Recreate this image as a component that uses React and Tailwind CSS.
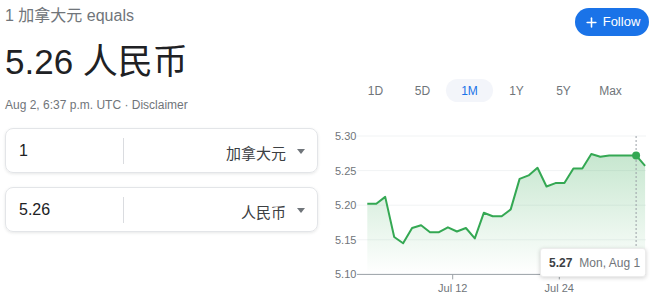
import { Plus } from 'lucide-react'

const FONT = { fontFamily: '"Liberation Sans", "Noto Sans CJK SC", Arial, sans-serif' }

const TABS = ['1D', '5D', '1M', '1Y', '5Y', 'Max']

// closing rates, Jul 2 – Aug 2
const RATES = [
  5.202, 5.202, 5.212, 5.154, 5.145, 5.167, 5.171, 5.161, 5.161, 5.168, 5.162, 5.167,
  5.152, 5.189, 5.184, 5.184, 5.194, 5.238, 5.243, 5.254, 5.227, 5.232, 5.232, 5.253,
  5.253, 5.274, 5.27, 5.272, 5.272, 5.272, 5.272, 5.257,
]

const Y_TICKS = [
  { label: '5.30', y: 11 },
  { label: '5.25', y: 45.6 },
  { label: '5.20', y: 80.2 },
  { label: '5.15', y: 114.8 },
]
const BASE_Y = 149.4

const toY = (v) => BASE_Y - ((v - 5.1) / 0.05) * 34.6
const toX = (i) => 37.3 + i * 8.96

function Chart() {
  const pts = RATES.map((v, i) => `${toX(i).toFixed(1)},${toY(v).toFixed(1)}`)
  const line = pts.join(' ')
  const area = `${toX(0)},${BASE_Y} ${line} ${toX(RATES.length - 1)},${BASE_Y}`
  const hx = toX(30)

  return (
    <div className="relative w-[320px] h-[182px]">
      <svg width="320" height="182" className="block">
        <defs>
          <linearGradient id="fillG" x1="0" y1="0" x2="0" y2="1">
            <stop offset="0%" stopColor="#34a853" stopOpacity="0.28" />
            <stop offset="100%" stopColor="#34a853" stopOpacity="0" />
          </linearGradient>
        </defs>
        {Y_TICKS.map(t => (
          <g key={t.label}>
            <line x1="27" x2="316" y1={t.y} y2={t.y} stroke="#f1f3f4" strokeWidth="1" />
            <text x="5" y={t.y + 4} fontSize="11" fill="#70757a" style={FONT}>{t.label}</text>
          </g>
        ))}
        <polygon points={area} fill="url(#fillG)" />
        <line x1={hx} x2={hx} y1="11" y2={BASE_Y} stroke="#9aa0a6" strokeWidth="1" strokeDasharray="2 2" />
        <polyline points={line} fill="none" stroke="#34a853" strokeWidth="2" strokeLinejoin="round" />
        <circle cx={hx} cy={toY(5.272)} r="4" fill="#34a853" />
        <line x1="27" x2="316" y1={BASE_Y} y2={BASE_Y} stroke="#9aa0a6" strokeWidth="1" />
        <text x="5" y={BASE_Y + 4} fontSize="11" fill="#70757a" style={FONT}>5.10</text>
        {[{ x: 122.7, l: 'Jul 12' }, { x: 229.3, l: 'Jul 24' }].map(t => (
          <g key={t.l}>
            <line x1={t.x} x2={t.x} y1={BASE_Y} y2={BASE_Y + 5} stroke="#9aa0a6" strokeWidth="1" />
            <text x={t.x} y={BASE_Y + 18} fontSize="11" fill="#70757a" textAnchor="middle" style={FONT}>{t.l}</text>
          </g>
        ))}
      </svg>
      {/* hover tooltip */}
      <div className="absolute left-[210px] top-[123px] w-[106px] h-[29px] bg-white rounded-[3px] shadow-[0_1px_4px_rgba(0,0,0,0.18)] border border-[#ececec] flex items-center pl-[8px] gap-[7px] text-[12px] whitespace-nowrap">
        <span className="font-semibold text-[#3c4043]">5.27</span>
        <span className="text-[#70757a]">Mon, Aug 1</span>
      </div>
    </div>
  )
}

function CurrencyBox({ amount, currency, className = '' }) {
  return (
    <div className={`w-[313px] h-[45px] border border-[#e3e5e8] rounded-[8px] shadow-[0_1px_3px_rgba(60,64,67,0.12)] flex items-center ${className}`}>
      <div className="w-[118px] h-[26px] flex items-center pl-[13px] border-r border-[#dadce0] text-[16px] text-[#202124]">
        {amount}
      </div>
      <div className="flex-1 flex items-center justify-end pt-[7px] pr-[12px] text-[15px] text-[#3c4043]">
        <span>{currency}</span>
        <span className="ml-[11px] mb-[6px] w-0 h-0 border-l-[4.5px] border-r-[4.5px] border-t-[5px] border-l-transparent border-r-transparent border-t-[#70757a]" />
      </div>
    </div>
  )
}

export default function App() {
  return (
    <div className="w-[650px] h-[307px] bg-white flex overflow-hidden" style={FONT}>
      {/* Left: converter */}
      <div className="w-[330px] pl-[5px]">
        <p className="mt-[6px] text-[16px] leading-[20px] text-[#70757a]">1 加拿大元 equals</p>
        <p className="mt-[18px] text-[35px] leading-[36px] text-[#202124]">5.26 人民币</p>
        <p className="mt-[17px] text-[12px] leading-[16px] text-[#70757a]">Aug 2, 6:37 p.m. UTC · Disclaimer</p>
        <CurrencyBox amount="1" currency="加拿大元" className="mt-[15px]" />
        <CurrencyBox amount="5.26" currency="人民币" className="mt-[14px]" />
      </div>

      {/* Right: follow + chart */}
      <div className="flex-1 flex flex-col">
        <div className="flex justify-end pt-[8px] pr-[1px]">
          <button className="h-[28px] w-[74px] rounded-full bg-[#1a73e8] text-white text-[13px] font-medium flex items-center justify-center gap-[4px]">
            <Plus size={15} strokeWidth={2.5} />
            Follow
          </button>
        </div>
        <div className="mt-[43px] flex pl-[22px]">
          {TABS.map(t => (
            <div
              key={t}
              className={`w-[47px] h-[23px] flex items-center justify-center rounded-full text-[12px] ${
                t === '1M' ? 'bg-[#f3f5fa] text-[#1a73e8]' : 'text-[#70757a]'
              }`}
            >
              {t}
            </div>
          ))}
        </div>
        <div className="mt-[23px]">
          <Chart />
        </div>
      </div>
    </div>
  )
}
